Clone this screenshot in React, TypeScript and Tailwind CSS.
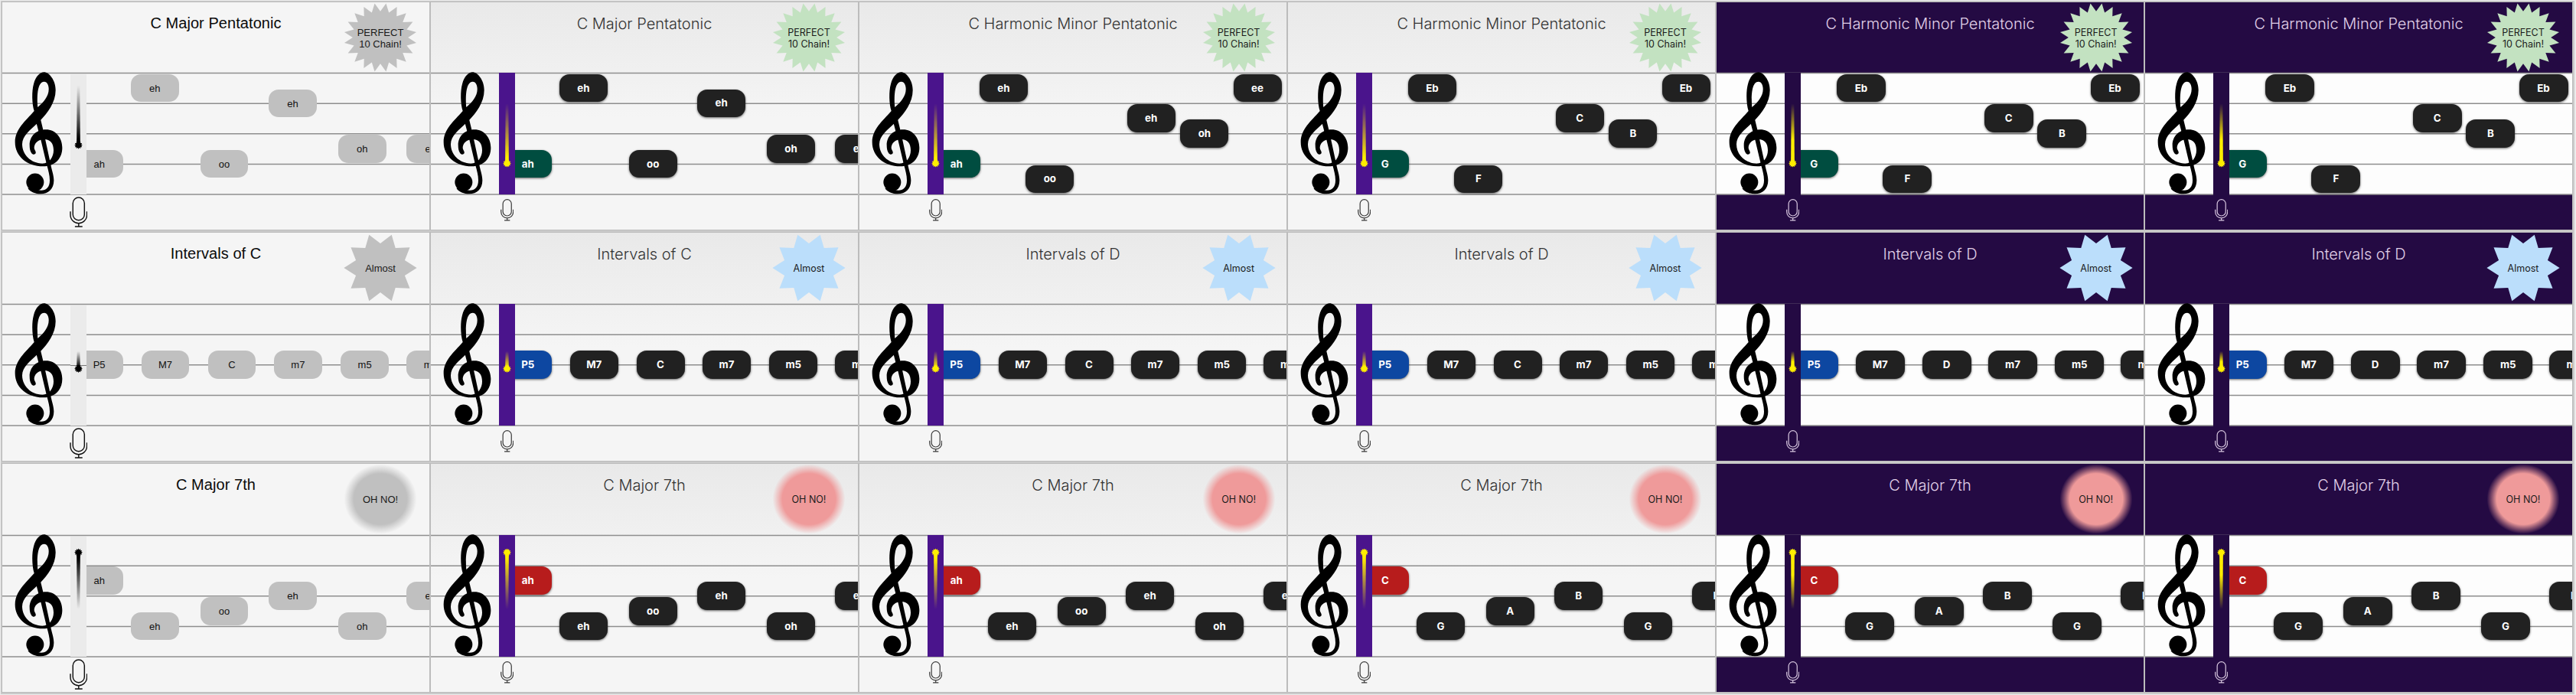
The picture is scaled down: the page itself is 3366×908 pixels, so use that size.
import React from "react";
import { clsx } from "clsx";

type Tone = "gray" | "light" | "dark";
type Kind = "perfect" | "almost" | "ohno";
type NoteSpec = { x: number; step: number };

const LINE = 39.62;
const STEP = LINE / 2;

const pentatonicMajor: NoteSpec[] = [
  { x: 95.3, step: 6 },
  { x: 167.9, step: 1 },
  { x: 258.7, step: 6 },
  { x: 348.2, step: 2 },
  { x: 439, step: 5 },
  { x: 528.4, step: 5 },
];
const pentatonicMinor: NoteSpec[] = [
  { x: 95.3, step: 6 },
  { x: 156.9, step: 1 },
  { x: 217.3, step: 7 },
  { x: 349.6, step: 3 },
  { x: 419.4, step: 4 },
  { x: 488.5, step: 1 },
];
const intervals: NoteSpec[] = [
  { x: 95.3, step: 4 },
  { x: 181.7, step: 4 },
  { x: 268.5, step: 4 },
  { x: 355, step: 4 },
  { x: 442.3, step: 4 },
  { x: 528.4, step: 4 },
];
const seventh: NoteSpec[] = [
  { x: 95.3, step: 3 },
  { x: 167.9, step: 6 },
  { x: 258.7, step: 5 },
  { x: 348.2, step: 4 },
  { x: 439, step: 6 },
  { x: 528.4, step: 4 },
];

const tones: Tone[] = ["gray", "light", "light", "light", "dark", "dark"];
const badgeX = [494, 494, 495.6, 493, 495.7, 494];

function starPoints(n: number, rx: number, ry: number, inner: number, phase: number, cx = 0, cy = 0) {
  const pts: string[] = [];
  for (let i = 0; i < n * 2; i++) {
    const k = i % 2 === 0 ? 1 : inner;
    const a = phase + (Math.PI * i) / n;
    pts.push(`${(cx + Math.cos(a) * rx * k).toFixed(2)},${(cy + Math.sin(a) * ry * k).toFixed(2)}`);
  }
  return pts.join(" ");
}

function Clef() {
  return (
    <svg
      className="absolute left-4 -top-px h-[159.7px] w-[62.7px]"
      viewBox="56 45 188 479"
      preserveAspectRatio="none"
      fill="#000"
    >
      <path
        fillRule="evenodd"
        d="M133,198 C124,170 123,120 131,92 C139,62 156,46 171,46 C192,46 217,78 217,116 C217,165 185,205 158,234 L143,248 C118,272 86,295 86,328 C86,370 120,403 165,404 C193,404 209,378 209,352 C209,325 196,309 172,309 C148,309 133,325 133,342 C133,350 141,356 139,363 C136,370 127,370 122,362 C117,354 115,345 115,332 C115,298 140,271 179,271 C217,271 243,303 243,342 C243,384 215,415 168,415 C105,415 58,375 58,320 C58,270 98,238 133,198 Z M147,183 C144,150 143,83 172,83 C184,83 190,97 190,113 C190,140 170,163 147,183 Z"
      />
      <path d="M141,243 L158,230 L170,280 L197,405 C203,435 210,450 210,470 C210,503 188,523 158,523 C140,523 115,515 108,500 L150,508 C175,513 194,500 194,470 C194,450 188,430 183,412 L160,315 Z" />
      <circle cx="136.5" cy="477" r="34.5" />
    </svg>
  );
}

function Mic({ tone }: { tone: Tone }) {
  return (
    <svg
      className={clsx(
        tone === "gray" && "mt-[3px] ml-[87.7px] h-[40px] w-[23.6px] text-[#111]",
        tone === "light" && "mt-[6px] ml-[91px] h-[28.6px] w-[17.4px] text-[#3a3a3a]",
        tone === "dark" && "mt-[6px] ml-[91px] h-[28.6px] w-[17.4px] text-[#d8c8e0]",
      )}
      viewBox="0 0 72 121"
      preserveAspectRatio="none"
      fill="none"
      stroke="currentColor"
      strokeWidth={tone === "gray" ? 4.4 : 5}
    >
      <rect x="13" y="3" width="46" height="90" rx="23" />
      <path d="M3,58 V71 C3,91 18,105 36,105 C54,105 69,91 69,71 V58 M36,105 V118 M21,118 H51" />
    </svg>
  );
}

function Marker({ tone, kind, uid }: { tone: Tone; kind: Kind; uid: string }) {
  const y = kind === "perfect" ? (tone === "gray" ? 94.6 : 118.4) : kind === "almost" ? 84.8 : 22.8;
  const tail = kind === "almost" ? -23 : kind === "perfect" ? -78 : 74;
  const color = tone === "gray" ? "#000" : "#ffee00";
  const end = y + tail;
  return (
    <svg className="absolute left-0 top-0 h-[160px] w-[22px] overflow-visible" viewBox="0 0 22 160">
      <defs>
        <linearGradient id={uid} gradientUnits="userSpaceOnUse" x1="0" y1={end} x2="0" y2={y}>
          <stop offset="0" stopColor={color} stopOpacity="0" />
          <stop offset={tone === "dark" ? "0.6" : "0.9"} stopColor={color} stopOpacity="1" />
          <stop offset="1" stopColor={color} />
        </linearGradient>
      </defs>
      <polygon
        points={`${10.5 - 2.4},${y} ${10.5 - 1.8},${end} ${10.5 + 1.8},${end} ${10.5 + 2.4},${y}`}
        fill={`url(#${uid})`}
      />
      <polygon points={starPoints(12, 5.4, 5.2, 0.7, 0, 10.5, y)} fill={color} />
    </svg>
  );
}

function Badge({ tone, kind, cx, uid }: { tone: Tone; kind: Kind; cx: number; uid: string }) {
  const gray = tone === "gray";
  const fill = gray ? "#c0c0c0" : kind === "perfect" ? "#c3e2c1" : kind === "almost" ? "#bbdefb" : "#ef9a9a";
  return (
    <div className="absolute top-0 h-[92px] w-24" style={{ left: cx - 48 }}>
      <svg className="absolute inset-0 h-[92px] w-24" viewBox="-48 -46 96 92">
        {kind === "perfect" && <polygon points={starPoints(20, 47.6, 45, 0.76, Math.PI / 20)} fill={fill} />}
        {kind === "almost" && <polygon points={starPoints(10, 47.6, 45.4, 0.705, 0)} fill={fill} />}
        {kind === "ohno" && (
          <>
            <defs>
              <radialGradient id={uid}>
                <stop offset="0.73" stopColor={fill} />
                <stop offset="0.86" stopColor={fill} stopOpacity="0.5" />
                <stop offset="1" stopColor={fill} stopOpacity="0" />
              </radialGradient>
            </defs>
            <ellipse rx="47.5" ry="45.5" fill={`url(#${uid})`} />
          </>
        )}
      </svg>
      <div
        className={clsx(
          "relative flex h-full flex-col items-center justify-center text-center leading-[15px] whitespace-nowrap text-[#1a1a1a]",
          gray ? "font-['Liberation_Sans',sans-serif] text-[13px]" : "font-[Inter,sans-serif] text-[12.5px]",
          kind === "perfect" && "pt-px",
        )}
      >
        {kind === "perfect" ? (
          <>
            <span>PERFECT</span>
            <span>10 Chain!</span>
          </>
        ) : kind === "almost" ? (
          <span>Almost</span>
        ) : (
          <span>OH NO!</span>
        )}
      </div>
    </div>
  );
}

function Note({ spec, label, tone, kind, active }: { spec: NoteSpec; label: string; tone: Tone; kind: Kind; active: boolean }) {
  return (
    <div
      className={clsx(
        "absolute flex h-[36.6px] items-center justify-center rounded-[13px] pt-px",
        tone === "gray" && "w-[62.7px] bg-[#c0c0c0] font-['Liberation_Sans',sans-serif] text-[13px] text-[#111]",
        tone !== "gray" && "font-[Inter,sans-serif] text-[13.3px] font-bold text-white shadow-[0_1px_3px_rgba(0,0,0,0.6)]",
        tone === "light" && "w-[63px]",
        tone === "dark" && "w-[64px]",
        tone !== "gray" && !active && "bg-[#212121]",
        tone !== "gray" && active && kind === "perfect" && "bg-[#004d40]",
        tone !== "gray" && active && kind === "almost" && "bg-[#0d47a1]",
        tone !== "gray" && active && kind === "ohno" && "bg-[#b71c1c]",
      )}
      style={{ left: spec.x, top: 0.4 + spec.step * STEP - 18.4 }}
    >
      {label}
    </div>
  );
}

type PanelSpec = { title: string; kind: Kind; notes: NoteSpec[]; labels: string[] };

function Panel({ spec, col }: { spec: PanelSpec; col: number }) {
  const tone = tones[col];
  const { kind } = spec;
  const uid = `${kind}-${col}`;
  return (
    <section
      className={clsx(
        "flex flex-col overflow-hidden border border-[#bcbcbc]",
        tone === "gray" && "bg-[#f5f5f5]",
        tone === "light" && "bg-[linear-gradient(#e9e9e9_0px,#f5f5f5_150px)]",
        tone === "dark" && "bg-[#240a43]",
      )}
    >
      <header className={clsx("relative shrink-0", kind === "perfect" ? "h-[92px]" : "h-[93px]")}>
        <h2
          className={clsx(
            "text-center text-[20px] leading-[28px] whitespace-nowrap",
            tone === "gray" && "pt-[13px] font-['Liberation_Sans',sans-serif] tracking-[0.06px] text-[#0a0a0a]",
            tone !== "gray" && "pt-[13.5px] font-[Inter,sans-serif] font-light",
            tone === "light" && "text-[#333]",
            tone === "dark" && "text-[#e0d0e8]",
          )}
        >
          {spec.title}
        </h2>
        <Badge tone={tone} kind={kind} cx={badgeX[col]} uid={`b-${uid}`} />
      </header>
      <div className={clsx("relative h-[159px] shrink-0", tone === "dark" && "bg-[#fdfdfd]")}>
        <svg className="absolute left-0 top-0 h-[160px] w-[558px] overflow-visible" viewBox="0 0 558 160">
          {[0, 1, 2, 3, 4].map((i) => (
            <line key={i} x1="0" x2="558" y1={0.6 + i * LINE} y2={0.6 + i * LINE} stroke="#8e8e8e" strokeWidth="1.5" />
          ))}
        </svg>
        <Clef />
        {spec.notes.map((n, i) => (
          <Note key={i} spec={n} label={spec.labels[i]} tone={tone} kind={kind} active={i === 0} />
        ))}
        <div
          className={clsx(
            "absolute left-[89px] w-[21.4px]",
            tone === "gray" && "top-[1.5px] h-[157px] bg-[#ebebeb]",
            tone === "light" && "top-0 h-[159px] bg-[#4a148c]",
            tone === "dark" && "top-0 h-[159.5px] bg-[#240a43]",
          )}
        >
          {tone === "gray" && kind === "almost" && <div className="mt-[78px] h-px bg-[#777]" />}
        </div>
        <div className="absolute left-[89px] top-0">
          <Marker tone={tone} kind={kind} uid={`m-${uid}`} />
        </div>
      </div>
      <footer className="flex-1">
        <Mic tone={tone} />
      </footer>
    </section>
  );
}

function rowPanels(row: number): PanelSpec[] {
  return tones.map((_, col) => {
    if (row === 0) {
      if (col < 2)
        return {
          title: "C Major Pentatonic",
          kind: "perfect",
          notes: pentatonicMajor,
          labels: ["ah", "eh", "oo", "eh", "oh", "eh"],
        };
      return {
        title: "C Harmonic Minor Pentatonic",
        kind: "perfect",
        notes: pentatonicMinor,
        labels: col === 2 ? ["ah", "eh", "oo", "eh", "oh", "ee"] : ["G", "Eb", "F", "C", "B", "Eb"],
      };
    }
    if (row === 1)
      return {
        title: col < 2 ? "Intervals of C" : "Intervals of D",
        kind: "almost",
        notes: intervals,
        labels: ["P5", "M7", col < 4 ? "C" : "D", "m7", "m5", "m7"],
      };
    return {
      title: "C Major 7th",
      kind: "ohno",
      notes: seventh,
      labels: col < 3 ? ["ah", "eh", "oo", "eh", "oh", "eh"] : ["C", "G", "A", "B", "G", "B"],
    };
  });
}

export default function App() {
  return (
    <main className="h-[908px] w-[3366px] overflow-hidden bg-[#ececec] pt-px pl-px">
      <div className="h-[906px] w-[3363px] bg-[#cacaca] pt-px pl-px">
        <div className="grid w-[3360px] grid-cols-6 grid-rows-[299px_300px_300px] gap-y-[2px]">
          {[0, 1, 2].map((row) =>
            rowPanels(row).map((spec, col) => <Panel key={`${row}-${col}`} spec={spec} col={col} />),
          )}
        </div>
      </div>
    </main>
  );
}
